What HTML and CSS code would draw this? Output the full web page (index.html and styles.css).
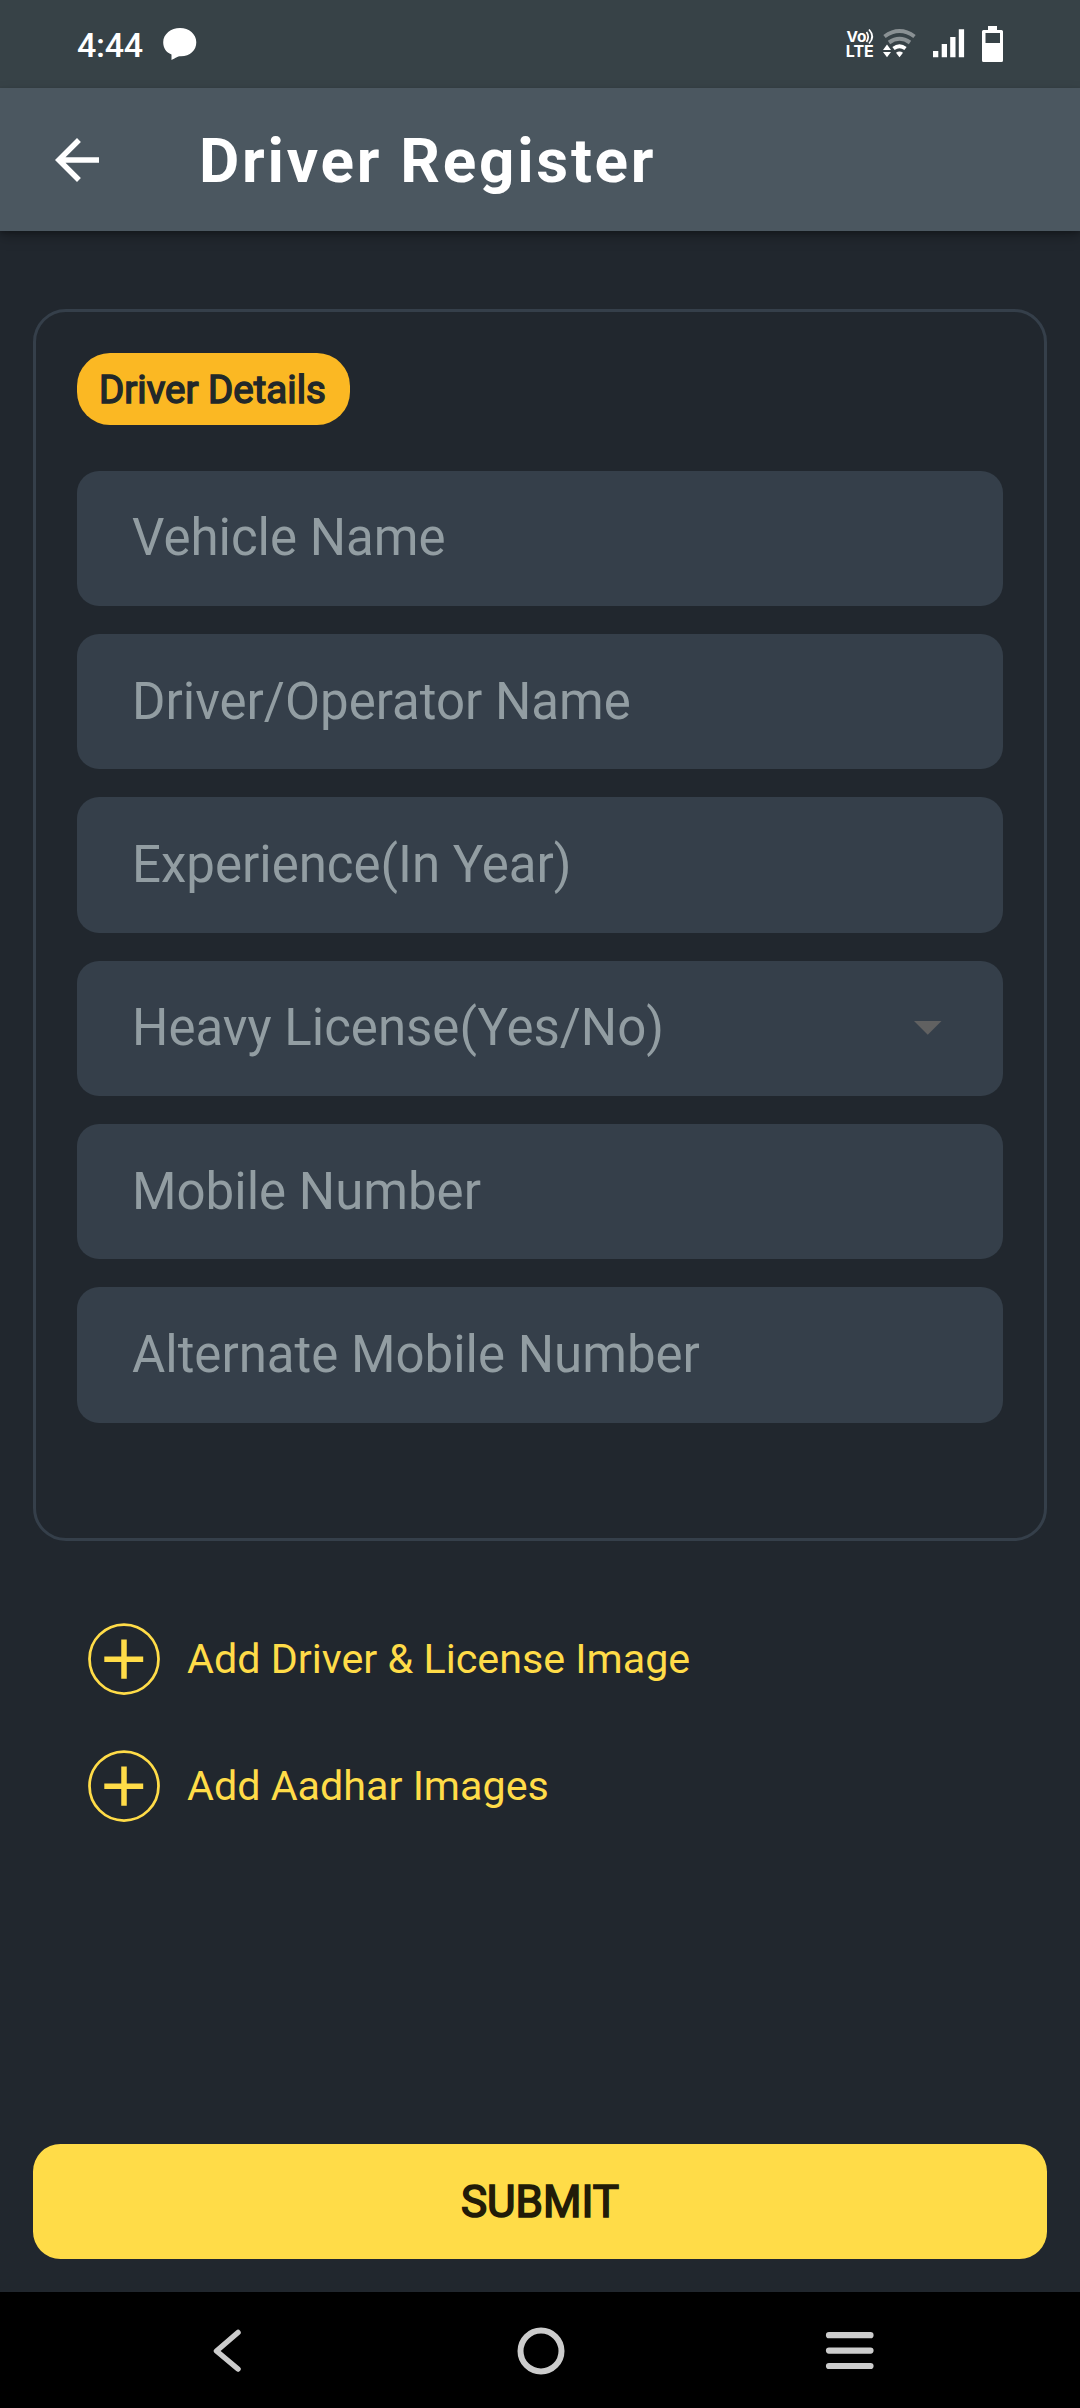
FILE: index.html
```html
<!DOCTYPE html>
<html lang="en">
<head>
<meta charset="utf-8">
<title>Driver Register</title>
<link rel="stylesheet" href="styles.css">
</head>
<body>
<div class="screen">
  <div class="status">
    <span class="clock">4:44</span>
    <svg class="bubble" width="34" height="33" viewBox="0 0 34 33"><path fill="#fff" d="M17 0C26 0 33.300 6 33.300 14.300C33.300 22.500 27 28.300 18 28.300C14 28.300 12.500 30.500 8.500 32V26.500C3 24.500.2 20 .2 14.300C.2 6 8 0 17 0Z"/></svg>
    <svg class="status-icons" width="160" height="40" viewBox="846 24 160 40">
      <text fill="#fff" font-family="Inter, sans-serif" font-weight="700"><tspan x="846.500" y="42.200" font-size="15" textLength="20" lengthAdjust="spacingAndGlyphs">Vo</tspan><tspan x="845.800" y="57.200" font-size="16.500" textLength="28" lengthAdjust="spacingAndGlyphs">LTE</tspan></text>
      <g fill="none" stroke="#fff" stroke-width="1.700">
        <path d="M866.500 32Q869.800 36.500 866.500 42"/><path d="M869 29.500Q875.500 36.500 869 43.500"/>
      </g>
      <g fill="none" stroke="#8a9194" stroke-width="4">
        <path d="M884.500 36.500Q899.500 25.500 914.500 36.500"/><path d="M889 42.500Q899.500 35 910 42.500"/>
      </g>
      <path d="M893.500 48.500Q899.500 44 905.500 48.500" fill="none" stroke="#fff" stroke-width="3.800"/>
      <path fill="#fff" d="M896 52.700Q899.500 50.200 903 52.700L899.500 57.200ZM883 50L887 44.500L891 50ZM883 52L887 57.200L891 52Z"/>
      <path fill="#fff" d="M933 51h5.300v6.300H933zM941.700 44h5.300v13.300h-5.300zM950.200 37h5.300v20.300h-5.300zM958.800 29.300h5.300v28h-5.300z"/>
      <path fill="#fff" fill-rule="evenodd" d="M988 26h9v4h4.500a1.500 1.500 0 0 1 1.500 1.500v29a1.500 1.500 0 0 1-1.500 1.500h-18a1.500 1.500 0 0 1-1.500-1.500v-29a1.500 1.500 0 0 1 1.500-1.500H988ZM985.500 33v10h14.500V33Z"/>
    </svg>
  </div>
  <header class="appbar">
    <svg width="66" height="66" viewBox="0 0 24 24"><path fill="#fff" d="M20 11H7.830l5.590-5.590L12 4l-8 8 8 8 1.410-1.410L7.830 13H20v-2z"/></svg>
    <h1 class="title">Driver Register</h1>
  </header>
  <main class="content">
    <section class="card">
      <div class="chip">Driver Details</div>
      <div class="fields">
        <div class="field">Vehicle Name</div>
        <div class="field">Driver/Operator Name</div>
        <div class="field">Experience(In Year)</div>
        <div class="field">Heavy License(Yes/No)<svg width="28" height="14" viewBox="0 0 28 14"><path fill="#616161" d="M0 0H27.500L13.750 13.750Z"/></svg></div>
        <div class="field">Mobile Number</div>
        <div class="field">Alternate Mobile Number</div>
      </div>
    </section>
    <div class="adders">
      <div class="adder"><svg width="72" height="72" viewBox="0 0 72 72" fill="none" stroke="#ffdc48"><circle cx="36" cy="36" r="34.500" stroke-width="2.750"/><path stroke-width="5.500" d="M16.300 36.200H55.200M36 16.500V55.700"/></svg>Add Driver &amp; License Image</div>
      <div class="adder"><svg width="72" height="72" viewBox="0 0 72 72" fill="none" stroke="#ffdc48"><circle cx="36" cy="36" r="34.500" stroke-width="2.750"/><path stroke-width="5.500" d="M16.300 36.200H55.200M36 16.500V55.700"/></svg>Add Aadhar Images</div>
    </div>
    <button class="submit">SUBMIT</button>
  </main>
  <nav class="navbar">
    <svg width="44" height="46" viewBox="0 0 44 46"><path d="M26 4.500L4.500 23L26 41" fill="none" stroke="#ccc" stroke-width="5.500" stroke-linecap="round" stroke-linejoin="round"/></svg>
    <svg width="48" height="48" viewBox="0 0 48 48"><circle cx="24" cy="24" r="20.500" fill="none" stroke="#ccc" stroke-width="6"/></svg>
    <svg width="50" height="38" viewBox="0 0 50 38"><path d="M4 3.200H45.500M4 18.600H45.500M4 34H45.500" stroke="#ccc" stroke-width="6.200" stroke-linecap="round"/></svg>
  </nav>
</div>
</body>
</html>
```
FILE: styles.css
```css
* { box-sizing: border-box; }
body { margin: 0; font-family: Roboto, "Liberation Sans", sans-serif; }
svg { display: block; flex: none; }
.screen {
  width: 1080px;
  height: 2408px;
  display: flex;
  flex-direction: column;
  background: #21272e;
}
.status {
  height: 88px;
  flex: none;
  display: flex;
  padding-left: 77px;
  background: #374247;
  color: #fff;
}
.clock { width: 86px; padding-top: 25px; font-size: 34px; line-height: 40px; font-weight: 500; letter-spacing: -.3px; }
.bubble { margin-top: 28px; }
.status-icons { margin: 24px 74px 0 auto; }
.appbar {
  height: 143px;
  flex: none;
  display: flex;
  align-items: center;
  padding-left: 44px;
  background: #4b5760;
  box-shadow: 0 6px 12px rgba(0, 0, 0, .25), 0 2px 4px rgba(0, 0, 0, .2);
}
.title {
  margin: 1px 0 0 89px;
  color: #fff;
  font-size: 62px;
  font-weight: 700;
  letter-spacing: 2.750px;
}
.content {
  flex: 1;
  display: flex;
  flex-direction: column;
  padding: 78px 33px 33px;
}
.card {
  height: 1232px;
  padding: 41px;
  border: 3px solid #353f4a;
  border-radius: 33px;
}
.chip {
  width: 273px;
  height: 72px;
  padding-left: 22px;
  border-radius: 33px;
  background: #fbb823;
  color: #22282a;
  font-size: 38.500px;
  line-height: 73px;
  -webkit-text-stroke: 1.500px #22282a;
  white-space: nowrap;
}
.fields { display: grid; gap: 27.900px; margin-top: 45.800px; }
.field {
  height: 135.400px;
  padding: 0 61px 1px 55px;
  display: flex;
  align-items: center;
  justify-content: space-between;
  border-radius: 22px;
  background: #353f4a;
  color: #929da2;
  font-size: 51px;
}
.adders { display: flex; flex-direction: column; gap: 54.500px; padding: 82px 0 0 55px; }
.adder { display: flex; align-items: center; gap: 27px; color: #ffdc48; font-size: 41.250px; }
.submit {
  height: 115px;
  margin-top: auto;
  padding: 0;
  border: 0;
  border-radius: 27.500px;
  background: #ffdc48;
  color: #221c08;
  font: 400 44px Roboto, "Liberation Sans", sans-serif;
  -webkit-text-stroke: 1.700px #221c08;
}
.navbar {
  height: 116px;
  flex: none;
  display: flex;
  align-items: center;
  justify-content: space-between;
  padding: 2px 205px 0 212px;
  background: #000;
}
```
